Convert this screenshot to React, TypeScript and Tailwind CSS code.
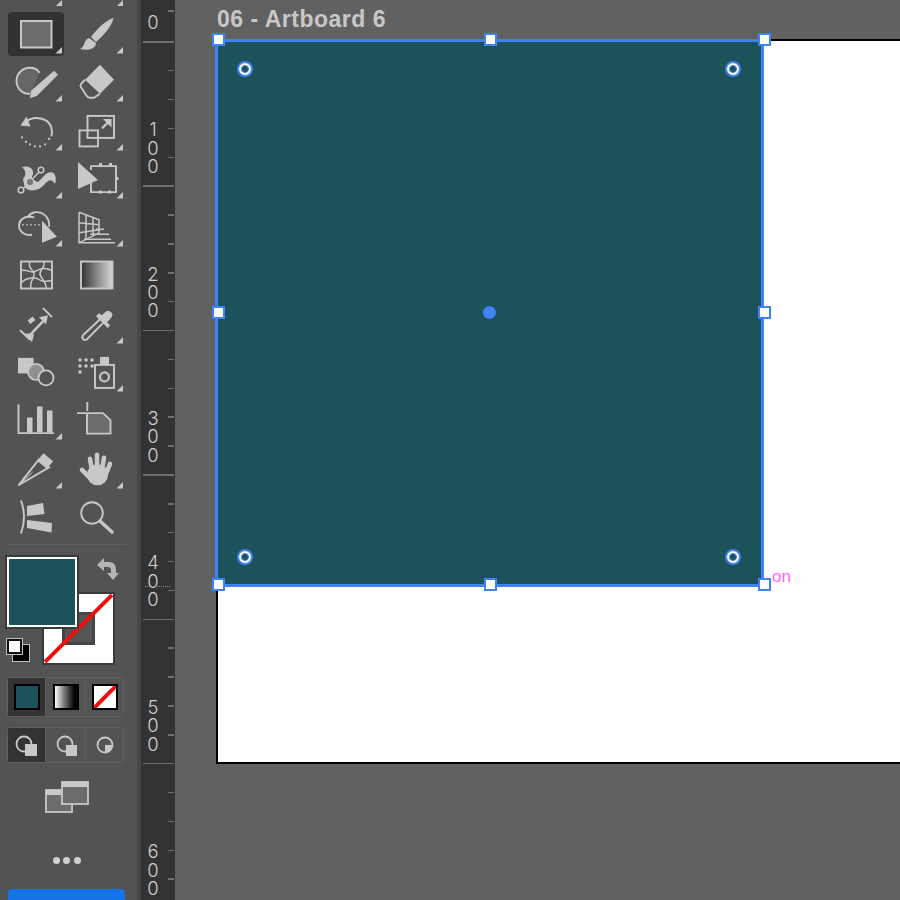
import type { ReactNode } from "react";

const ink = "#c8c8c8";
const CELL_W = 61;
const CELL_H = 48.3;

// icons are drawn in page coordinates, the viewBox of each cell crops to its slot
function Tool({ col, row, flyout, selected, children }: { col: number; row: number; flyout?: boolean; selected?: boolean; children?: ReactNode }) {
  const vx = 6 + col * CELL_W;
  const vy = 10 + row * CELL_H;
  const tx = vx + 56;
  const ty = 53.5 + row * CELL_H;
  return (
    <div className="relative w-[61px] h-[48.3px]">
      {selected && <div className="absolute left-[2px] top-[2px] w-[56px] h-[44px] rounded-[4px] bg-[#323232]" />}
      <svg className="relative block" width={CELL_W} height={CELL_H} viewBox={`${vx} ${vy} ${CELL_W} ${CELL_H}`} fill="none" stroke={ink} strokeWidth="1.9">
        {children}
        {flyout && <path d={`M${tx} ${ty}h-6.5l6.5-6.5z`} fill={ink} stroke="none" />}
      </svg>
    </div>
  );
}

function Handle() {
  return <div className="w-[13px] h-[13px] bg-white border-2 border-[#3f83f8]" />;
}

function Widget() {
  return (
    <div className="w-[16px] h-[16px] rounded-full bg-white border-[2px] border-[#3f83f8] flex items-center justify-center">
      <div className="w-[8px] h-[8px] rounded-full bg-[#1b525b] border border-[#3f83f8]" />
    </div>
  );
}

function RulerSegment({ label, dots }: { label: string; dots?: boolean }) {
  return (
    <div className="relative h-[144.4px] shrink-0 flex flex-col">
      {[0, 1, 2, 3, 4].map((i) => (
        <div key={i} className="h-1/5 flex justify-end pr-[1px]">
          <div className={i === 0 ? "w-[31px] h-[1.5px] bg-[#6f6f6f]" : "w-[6px] h-[1.5px] bg-[#6f6f6f]"} />
        </div>
      ))}
      <div className="absolute left-[2px] bottom-[10px] w-[20px] flex flex-col items-center font-['Inter',sans-serif] text-[18.4px] leading-[18.4px] font-light text-[#d0d0d0]">
        {label.split("").map((c, i) => (
          <span key={i}>{c}</span>
        ))}
      </div>
      {dots && <div className="absolute left-[4px] top-[112px] w-[25px] border-t-[1.5px] border-dotted border-[#8a8a8a]" />}
    </div>
  );
}

export default function App() {
  return (
    <div className="w-[900px] h-[900px] flex overflow-hidden bg-[#616161] font-['Liberation_Sans',Arial,sans-serif]">
      {/* Toolbar */}
      <div className="w-[137px] h-full shrink-0 bg-[#535353] flex flex-col pl-[6px]">
        <div className="h-[10px] shrink-0 flex">
          {[0, 1].map((i) => (
            <div key={i} className="w-[61px] h-[10px] flex justify-end items-start pr-[5px]">
              <svg width="6" height="6" viewBox="0 0 6 6"><path d="M6 6H0L6 0z" fill={ink} /></svg>
            </div>
          ))}
        </div>
        <div className="grid shrink-0 grid-cols-[61px_61px] auto-rows-[48.3px]">
          {/* rectangle */}
          <Tool col={0} row={0} flyout selected>
            <rect x="21" y="21" width="30.500" height="26.500" fill="#6c6c6c" strokeWidth="2" />
          </Tool>
          {/* brush */}
          <Tool col={1} row={0} flyout>
            <path d="M113.500 18C106 20 97 29 91 37l5 5c8-7 16-16 17.500-24zM89 38c-6 2-3 8-9 11 8 2 16 0 16-6z" fill={ink} stroke="none" />
          </Tool>
          {/* shaper */}
          <Tool col={0} row={1} flyout>
            <path d="M30 94C22 95 16.500 88 16.500 81c0-8 7-13 13-13 4 0 8 1.500 10 5" fill="#666" />
            <path d="M54 71l4 4-21 21-7 2.500 1-7.500z" fill={ink} stroke="none" />
          </Tool>
          {/* eraser */}
          <Tool col={1} row={1} flyout>
            <path d="M100 65l14 15-14 14-15-14z" fill={ink} stroke="none" />
            <path d="M85 80l-4 4.500q-1 1.500 0 3l6 9q1 1.500 3 1.500h4l6-4" />
          </Tool>
          {/* rotate */}
          <Tool col={0} row={2} flyout>
            <path d="M25 122c9-8 27-5 27 10 0 1 0 3-1 4" />
            <path d="M20.500 125l6-9 4 10z" fill={ink} stroke="none" />
            <path d="M22 137h.01M26 141.500h.01M30 144h.01M35 146h.01M40 146h.01M45 144h.01M49 138.500h.01" strokeWidth="2.200" strokeLinecap="round" />
          </Tool>
          {/* scale */}
          <Tool col={1} row={2} flyout>
            <rect x="87.500" y="115.500" width="26.500" height="22" />
            <rect x="79.500" y="130" width="18.500" height="16" />
            <path d="M102 128l8-8" strokeWidth="2.200" />
            <path d="M103 118.500h8.500v8.500z" fill={ink} stroke="none" />
          </Tool>
          {/* puppet warp */}
          <Tool col={0} row={3} flyout>
            <path d="M22 167c6-2 12 1 11 7-1 3-2 5 0 6l5 2 6-6c3-4 9-6 11-1 1 3 1 6 0 9-2-3-4-5-7-3-3 2-6 8-13 9-5 1-10 0-11-6l-1-5c2-2 3-5 2-8-1-2-2-3-3-4z" fill={ink} stroke="none" />
            <path d="M21 191l20-21" strokeWidth="1.500" />
            <circle cx="41" cy="170" r="2.800" fill="#535353" strokeWidth="1.500" />
            <circle cx="21" cy="190" r="2.800" fill="#535353" strokeWidth="1.500" />
            <circle cx="30" cy="182" r="3.800" fill="#777" strokeWidth="1.500" />
          </Tool>
          {/* free transform */}
          <Tool col={1} row={3} flyout>
            <path d="M91 170v-4h25v26H91v-9" />
            <path d="M78 162l20 18-20 9z" fill={ink} stroke="none" />
            <path d="M99 164.500h3M109 164.500h3M117 177v3M99 192h3M108 192h3M91 191h1" strokeWidth="3" />
          </Tool>
          {/* shape builder */}
          <Tool col={0} row={4} flyout>
            <path d="M32 235c-7 1-13-3-13-9 0-6 5-9 10-9 2 0 4 0 5 1" />
            <path d="M28 217c3-5 10-6 15-3 5 3 7 9 6 13" />
            <path d="M23 225h.01M27 225h.01M31 225h.01M35 225h.01M39 225h.01" strokeLinecap="round" strokeWidth="1.800" />
            <path d="M42 221l15 16-15 6z" fill={ink} stroke="none" />
          </Tool>
          {/* perspective grid */}
          <Tool col={1} row={4} flyout>
            <path d="M79 212.500v30.500h36M79 212.500l20 7.500v13l-20 10M86 215v24M93 217.500v18M79 223l20 2M79 233l20-3" strokeWidth="1.500" />
            <path d="M84 239.500h27M90 234.500h19M96 229.500h8" strokeWidth="1.500" />
          </Tool>
          {/* mesh */}
          <Tool col={0} row={5}>
            <rect x="21" y="262" width="31" height="27" />
            <path d="M21 271c8-1 10 3 14 1s8-5 17-1M21 283c6-5 14-6 18-3s7 2 13 1M30 262c-3 6 3 8 4 12s-5 8-3 15M44 262c2 5-5 9-4 13s7 8 6 14" strokeWidth="1.500" />
          </Tool>
          {/* gradient */}
          <Tool col={1} row={5}>
            <defs>
              <linearGradient id="gradTool" x1="0" x2="1" y1="0" y2="0">
                <stop offset="0" stopColor="#333" />
                <stop offset="1" stopColor="#d8d8d8" />
              </linearGradient>
            </defs>
            <rect x="81" y="262" width="31.500" height="27" fill="url(#gradTool)" />
          </Tool>
          {/* measure */}
          <Tool col={0} row={6}>
            <path d="M20 330l10 9.500M43 308l9 9" />
            <path d="M30 335l15-16" strokeWidth="2.500" />
            <path d="M25 333l9 1-2 8zM48 315l-2 9-7-7z" fill={ink} stroke="none" />
            <path d="M29 322l5-4" strokeWidth="4.500" />
          </Tool>
          {/* eyedropper */}
          <Tool col={1} row={6} flyout>
            <path d="M100 319l-17 16c-2 3 1 6 4 4l17-17" />
            <path d="M96 316l12 12 2-3-3-3 3-3c3-3 3-6 1-7-2-2-4-2-6 0l-3 3-3-2z" fill={ink} stroke="none" />
          </Tool>
          {/* blend */}
          <Tool col={0} row={7}>
            <rect x="18" y="358" width="15.500" height="15.500" fill={ink} stroke="none" />
            <circle cx="36" cy="372" r="8" fill="#8f8f8f" />
            <circle cx="46" cy="378" r="7.500" fill="#535353" />
          </Tool>
          {/* symbol sprayer */}
          <Tool col={1} row={7} flyout>
            <path d="M80 360h.01M86 360h.01M92 360h.01M80 366h.01M86 366h.01M92 366h.01M80 372h.01" strokeWidth="3.500" strokeLinecap="round" />
            <rect x="100" y="357" width="9" height="8" fill={ink} stroke="none" />
            <rect x="95" y="365" width="19" height="23" />
            <circle cx="104.500" cy="377" r="4.500" strokeWidth="2.200" />
          </Tool>
          {/* graph */}
          <Tool col={0} row={8} flyout>
            <path d="M18.500 405v28.500H54" />
            <path d="M27 418h5.500v15H27zM37 407h5.500v26H37zM47 411h5.500v22H47z" fill={ink} stroke="none" />
          </Tool>
          {/* artboard */}
          <Tool col={1} row={8}>
            <path d="M87.300 402.500v9M77 413.500h9" />
            <path d="M87 413.500h16l7.500 7V434H87z" fill="#6c6c6c" />
          </Tool>
          {/* slice */}
          <Tool col={0} row={9} flyout>
            <path d="M18.500 485L39 459l10 8z" />
            <path d="M43.500 453l9.500 8-6 7.500-10-8z" fill={ink} stroke="none" />
            <path d="M18.500 485l14-13" strokeWidth="1" />
          </Tool>
          {/* hand */}
          <Tool col={1} row={9} flyout>
            <ellipse cx="97.500" cy="474.500" rx="10.500" ry="10.500" fill={ink} stroke="none" />
            <path d="M82 469.500l7 7M90 458.500l2 12M97 454.500v14M104 457.500l-2 12M110 463.500l-4 10" stroke={ink} strokeWidth="4.500" strokeLinecap="round" />
          </Tool>
          {/* width */}
          <Tool col={0} row={10}>
            <path d="M21 500.500c4 11 4 22 0 33" />
            <path d="M27 506l16-3 1.500 11L27 516zM27 520l25 3-.500 9.500L27 528z" fill={ink} stroke="none" />
          </Tool>
          {/* zoom */}
          <Tool col={1} row={10}>
            <circle cx="92" cy="513" r="10.800" />
            <path d="M100 521l12 11" strokeWidth="3.500" strokeLinecap="round" />
          </Tool>
        </div>

        <div className="w-[121px] h-[1px] mt-[3px] shrink-0 bg-[#5f5f5f]" />

        {/* Fill and stroke */}
        <div className="relative w-[122px] h-[110px] mt-[9.7px] shrink-0">
          <div className="absolute left-[36px] top-[37px] w-[73px] h-[73px] bg-white border-2 border-[#3a3a3a] flex items-center justify-center">
            <div className="w-[33px] h-[33px] bg-[#555] border-[3px] border-[#444]" />
            <svg className="absolute inset-0" viewBox="0 0 69 69" width="69" height="69">
              <path d="M1 68L68 1" stroke="#f00f0f" strokeWidth="4" />
            </svg>
          </div>
          <div className="absolute left-[1px] top-[2px] w-[70px] h-[70px] bg-[#1b525b] border-[2px] border-white outline-[2px] outline-[#3a3a3a]" />
          <svg className="absolute left-[90px] top-[2px]" width="24" height="24" viewBox="0 0 24 24">
            <path d="M1 8l7-7v4h5c5 0 7 3 7 8v3h3l-6 7-6-7h4v-3c0-2-1-3-3-3H8v4z" fill="#b5b5b5" />
          </svg>
          <div className="absolute left-0 top-[83px] w-[24px] h-[24px]">
            <div className="absolute left-[6px] top-[6px] w-[18px] h-[18px] bg-black border-[1.5px] border-[#c0c0c0]" />
            <div className="absolute left-[1px] top-[1px] w-[15px] h-[15px] bg-white border-[2px] border-[#111] outline-[1px] outline-[#c0c0c0]" />
          </div>
        </div>

        {/* Colour modes */}
        <div className="w-[117px] h-[40px] mt-[12px] ml-[1px] shrink-0 flex rounded-[3px] border border-[#5f5f5f]">
          <div className="w-[37px] bg-[#333] flex items-center justify-center">
            <div className="w-[26px] h-[26px] bg-[#1b525b] border-[2px] border-black" />
          </div>
          <div className="w-[41px] border-x border-[#5f5f5f] flex items-center justify-center">
            <div className="w-[26px] h-[26px] bg-gradient-to-r from-white to-black border-[2px] border-black" />
          </div>
          <div className="flex-1 flex items-center justify-center">
            <div className="w-[26px] h-[26px] bg-white border-[2px] border-black">
              <svg viewBox="0 0 22 22" width="22" height="22"><path d="M0 22L22 0" stroke="#f00f0f" strokeWidth="4" /></svg>
            </div>
          </div>
        </div>

        {/* Draw modes */}
        <div className="w-[117px] h-[36px] mt-[10px] ml-[1px] shrink-0 flex rounded-[3px] border border-[#5f5f5f]">
          <div className="w-[37px] bg-[#333] flex items-center justify-center">
            <svg width="24" height="24" viewBox="0 0 24 24" fill="none" stroke={ink} strokeWidth="1.800">
              <circle cx="9" cy="11" r="7.500" />
              <rect x="10" y="11" width="12" height="12" fill={ink} stroke="none" />
            </svg>
          </div>
          <div className="w-[41px] border-x border-[#5f5f5f] flex items-center justify-center">
            <svg width="24" height="24" viewBox="0 0 24 24" fill="none" stroke={ink} strokeWidth="1.800">
              <circle cx="11" cy="11" r="7.500" />
              <rect x="12" y="12" width="11" height="11" fill={ink} stroke="none" />
            </svg>
          </div>
          <div className="flex-1 flex items-center justify-center">
            <svg width="20" height="20" viewBox="0 0 20 20" fill="none" stroke={ink} strokeWidth="1.800">
              <circle cx="10" cy="10" r="7.500" />
              <path d="M10 10h7.500a7.500 7.500 0 0 1-7.500 7.500z" fill={ink} stroke="none" />
            </svg>
          </div>
        </div>

        {/* Screen mode */}
        <div className="flex justify-center mt-[18px] w-[121px] shrink-0">
          <svg width="44" height="32" viewBox="0 0 44 32" fill="#6c6c6c" stroke={ink} strokeWidth="1.800">
            <rect x="1" y="9" width="26" height="22" />
            <path d="M1 9h26v5H1z" fill={ink} stroke="none" />
            <rect x="17" y="1" width="26" height="22" />
            <path d="M17 1h26v5H17z" fill={ink} stroke="none" />
          </svg>
        </div>

        <div className="flex justify-center gap-[3.500px] mt-[44.5px] w-[121px] shrink-0">
          <div className="w-[7px] h-[7px] rounded-full bg-[#d0d0d0]" />
          <div className="w-[7px] h-[7px] rounded-full bg-[#d0d0d0]" />
          <div className="w-[7px] h-[7px] rounded-full bg-[#d0d0d0]" />
        </div>

        <div className="w-[117px] h-[20px] mt-[24.5px] ml-[2px] shrink-0 rounded-t-[4px] bg-[#1473e6]" />
      </div>

      <div className="w-[4px] h-full shrink-0 bg-[#474747]" />

      {/* Ruler */}
      <div className="w-[34px] h-full shrink-0 bg-[#333] flex flex-col">
        <div className="relative h-[41px] shrink-0 flex justify-end pr-[1px] pt-[10px]">
          <div className="w-[6px] h-[1.5px] bg-[#6f6f6f]" />
          <div className="absolute left-[2px] bottom-[10px] w-[20px] text-center font-['Inter',sans-serif] text-[18.4px] leading-[18.4px] font-light text-[#d0d0d0]">0</div>
        </div>
        <RulerSegment label="100" />
        <RulerSegment label="200" />
        <RulerSegment label="300" />
        <RulerSegment label="400" dots />
        <RulerSegment label="500" />
        <RulerSegment label="600" />
      </div>

      {/* Canvas */}
      <div className="relative flex-1 h-full">
        <div className="absolute left-[42px] top-[6px] text-[23px] leading-[27px] font-bold tracking-[0.5px] text-[#c8c8c8] whitespace-nowrap">06 - Artboard 6</div>
        <div className="absolute left-[41px] top-[39px] w-[720px] h-[725px] bg-white border-2 border-black" />
        <div className="absolute left-[40px] top-[39px] w-[549px] h-[548px] bg-[#1b525b] border-[3px] border-[#3f83f8]" />

        <div className="absolute left-[37px] top-[33px]"><Handle /></div>
        <div className="absolute left-[309px] top-[33px]"><Handle /></div>
        <div className="absolute left-[583px] top-[33px]"><Handle /></div>
        <div className="absolute left-[37px] top-[306px]"><Handle /></div>
        <div className="absolute left-[583px] top-[306px]"><Handle /></div>
        <div className="absolute left-[37px] top-[578px]"><Handle /></div>
        <div className="absolute left-[309px] top-[578px]"><Handle /></div>
        <div className="absolute left-[583px] top-[578px]"><Handle /></div>

        <div className="absolute left-[62px] top-[61px]"><Widget /></div>
        <div className="absolute left-[550px] top-[61px]"><Widget /></div>
        <div className="absolute left-[62px] top-[549px]"><Widget /></div>
        <div className="absolute left-[550px] top-[549px]"><Widget /></div>

        <div className="absolute left-[308px] top-[306px] w-[13px] h-[13px] rounded-full bg-[#3f83f8]" />
        <div className="absolute left-[597px] top-[567px] text-[17px] leading-[20px] text-[#ff66ff]">on</div>
      </div>
    </div>
  );
}
